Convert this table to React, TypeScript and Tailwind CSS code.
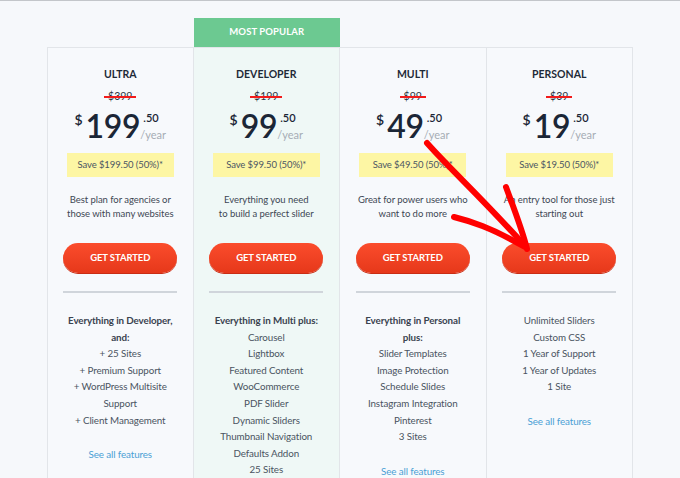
import React from "react";

type Plan = {
  name: string;
  oldPrice: string;
  price: string;
  save: string;
  blurb: string[];
  lead: string[];
  features: string[];
  popular?: boolean;
};

const plans: Plan[] = [
  {
    name: "ULTRA",
    oldPrice: "$399",
    price: "199",
    save: "Save $199.50 (50%)*",
    blurb: ["Best plan for agencies or", "those with many websites"],
    lead: ["Everything in Developer,", "and:"],
    features: ["+ 25 Sites", "+ Premium Support", "+ WordPress Multisite", "Support", "+ Client Management"],
  },
  {
    name: "DEVELOPER",
    oldPrice: "$199",
    price: "99",
    save: "Save $99.50 (50%)*",
    blurb: ["Everything you need", "to build a perfect slider"],
    lead: ["Everything in Multi plus:"],
    features: [
      "Carousel",
      "Lightbox",
      "Featured Content",
      "WooCommerce",
      "PDF Slider",
      "Dynamic Sliders",
      "Thumbnail Navigation",
      "Defaults Addon",
      "25 Sites",
    ],
    popular: true,
  },
  {
    name: "MULTI",
    oldPrice: "$99",
    price: "49",
    save: "Save $49.50 (50%)*",
    blurb: ["Great for power users who", "want to do more"],
    lead: ["Everything in Personal", "plus:"],
    features: ["Slider Templates", "Image Protection", "Schedule Slides", "Instagram Integration", "Pinterest", "3 Sites"],
  },
  {
    name: "PERSONAL",
    oldPrice: "$39",
    price: "19",
    save: "Save $19.50 (50%)*",
    blurb: ["An entry tool for those just", "starting out"],
    lead: [],
    features: ["Unlimited Sliders", "Custom CSS", "1 Year of Support", "1 Year of Updates", "1 Site"],
  },
];

function PlanColumn({ plan, first }: { plan: Plan; first: boolean }) {
  return (
    <div className="flex flex-col">
      {plan.popular ? (
        <div className="flex h-[29px] items-center justify-center bg-[#6cc991] text-[9.5px] font-bold tracking-[0.1px] text-white">
          MOST POPULAR
        </div>
      ) : (
        <div className="h-[29px]" />
      )}
      <div
        className={`flex flex-1 flex-col items-center border-t border-r border-[#e2e5e9] pt-[19px] ${
          first ? "border-l" : ""
        } ${plan.popular ? "bg-[#eff8f6]" : "bg-[#f7f9fc]"}`}
      >
        <div className="text-[10.5px] leading-[14px] font-bold text-[#1e2a38]">{plan.name}</div>
        <div className="relative mt-[8px] text-[10.5px] leading-[14px] text-[#2a3542]">
          {plan.oldPrice}
          <span className="absolute top-[7px] -left-[4px] -right-[4px] h-[1.5px] bg-[#f21b1b]" />
        </div>
        <div className="mt-[7px] flex h-[36px] items-start text-[#1b2636]">
          <span className="mt-[3px] mr-[3px] text-[14px] leading-none font-semibold">$</span>
          <span className="text-[32px] leading-[32px] font-semibold tracking-[-0.3px]">{plan.price}</span>
          <span className="ml-[3px] flex flex-col">
            <span className="mt-[2px] text-[11px] leading-[11px] font-semibold">.50</span>
            <span className="mt-[6px] -ml-[3px] text-[11px] leading-[11px] text-[#a6adb5]">/year</span>
          </span>
        </div>
        <div className="mt-[7px] flex h-[24px] w-[107px] items-center justify-center bg-[#fdf6a4] text-[9.5px] tracking-[-0.1px] text-[#4b5563]">
          {plan.save}
        </div>
        <div className="mt-[16px] h-[36px] text-center text-[9.5px] leading-[14px] tracking-[-0.05px] text-[#3d4754]">
          {plan.blurb.map((l) => (
            <div key={l}>{l}</div>
          ))}
        </div>
        <button className="mt-[14px] h-[30px] w-[114px] rounded-full bg-gradient-to-b from-[#fb4c2c] to-[#e6381a] text-[9.5px] font-bold tracking-[-0.1px] text-white shadow-[0_1px_0_#c92d14]">
          GET STARTED
        </button>
        <div className="mt-[18px] h-[2px] w-[114px] bg-[#d0d5db]" />
        <div className="mt-[19px] flex flex-col items-center text-[9.8px] leading-[16.6px] tracking-[-0.1px] text-[#4a5461]">
          {plan.lead.map((l) => (
            <div key={l} className="font-bold text-[#3a4350]">
              {l}
            </div>
          ))}
          {plan.features.map((f) => (
            <div key={f}>{f}</div>
          ))}
          <a className="mt-[18px] text-[#4aa0d5]">See all features</a>
        </div>
      </div>
    </div>
  );
}

export default function App() {
  return (
    <div
      className="relative h-[478px] w-[680px] overflow-hidden border-t border-[#c3c6ca] bg-[#f6f8fb]"
      style={{ fontFamily: "Lato, 'Noto Sans', sans-serif" }}
    >
      <div className="mx-auto mt-[17px] grid h-[470px] w-[586px] grid-cols-4">
        {plans.map((p, i) => (
          <PlanColumn key={p.name} plan={p} first={i === 0} />
        ))}
      </div>
      <svg className="pointer-events-none absolute top-0 left-0" width="680" height="478" viewBox="0 0 680 478">
        <g fill="none" stroke="#f00" strokeWidth="6" strokeLinecap="round" strokeLinejoin="round">
          <path d="M427 142 C450 168 480 195 526 246" />
          <path d="M454 216 C470 220 490 226 525 246" />
          <path d="M506 186 C514 208 522 228 527 248" />
        </g>
      </svg>
    </div>
  );
}
